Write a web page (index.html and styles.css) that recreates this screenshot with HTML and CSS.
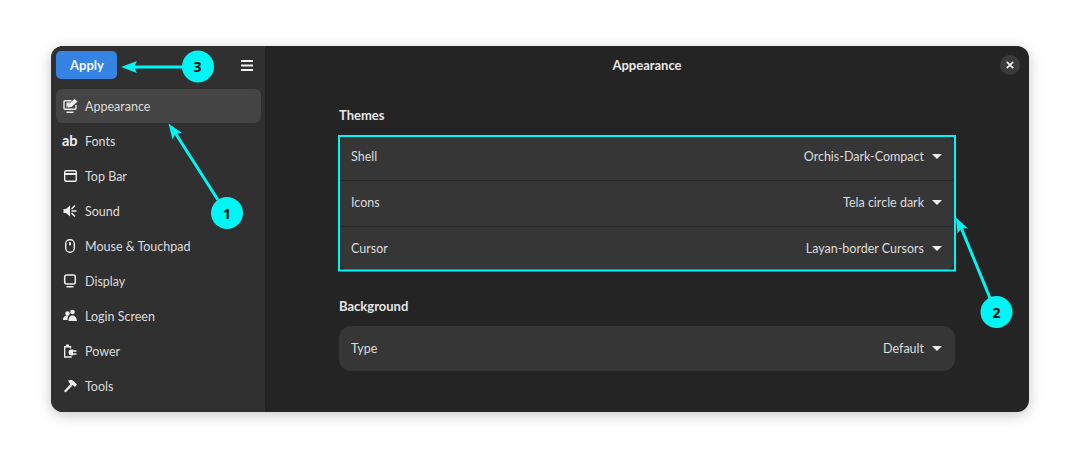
FILE: index.html
```html
<!DOCTYPE html>
<html lang="en">
<head>
<meta charset="utf-8">
<title>Appearance</title>
<link rel="stylesheet" href="styles.css">
</head>
<body>
<div class="window">
  <aside class="sidebar">
    <div class="side-head">
      <button class="apply">Apply</button>
      <svg class="menu" width="12" height="11" viewBox="0 0 12 11"><path d="M0 1h12M0 5.500h12M0 10h12" stroke="#f0f0f0" stroke-width="1.800"/></svg>
    </div>
    <nav class="nav">
      <div class="nav-row active">
        <svg class="ico" viewBox="0 0 16 16"><path d="M9.500 2.700H3a1 1 0 0 0-1 1v6.600a1 1 0 0 0 1 1h10a1 1 0 0 0 1-1V7" fill="none" stroke="#eee" stroke-width="1.400"/><path d="M4.500 14.200h7" stroke="#eee" stroke-width="1.600"/><path d="M4.500 4.500h4L6 7.500l-1 2h-.5z" fill="#eee"/><path d="M5.500 9.500l1-3 6-5.500 3 2.500-6 5.500z" fill="#eee"/></svg>
        <span>Appearance</span>
      </div>
      <div class="nav-row"><span class="ico ab">ab</span><span>Fonts</span></div>
      <div class="nav-row">
        <svg class="ico" viewBox="0 0 16 16"><rect x="2.700" y="2.700" width="11.600" height="10.600" rx="1.500" fill="none" stroke="#eee" stroke-width="1.400"/><path d="M3 6h11" stroke="#eee" stroke-width="1.800"/></svg>
        <span>Top Bar</span>
      </div>
      <div class="nav-row">
        <svg class="ico" viewBox="0 0 16 16"><path d="M1.500 6v4h2.500l4 3.500v-11l-4 3.500z" fill="#eee"/><path d="M9.500 8h5M9.500 6l3.500-3.500M9.500 10l3.500 3.500" stroke="#eee" stroke-width="1.500"/></svg>
        <span>Sound</span>
      </div>
      <div class="nav-row">
        <svg class="ico" viewBox="0 0 16 16"><rect x="3.700" y="1.700" width="8.600" height="12.600" rx="4" fill="none" stroke="#eee" stroke-width="1.400"/><rect x="7" y="4" width="2" height="3.500" rx="1" fill="#eee"/></svg>
        <span>Mouse &amp; Touchpad</span>
      </div>
      <div class="nav-row">
        <svg class="ico" viewBox="0 0 16 16"><rect x="2.700" y="2" width="10.600" height="9" rx="2" fill="none" stroke="#eee" stroke-width="1.500"/><path d="M4.500 13.800h7" stroke="#eee" stroke-width="1.600"/></svg>
        <span>Display</span>
      </div>
      <div class="nav-row">
        <svg class="ico" viewBox="0 0 16 16"><circle cx="5.500" cy="5.500" r="2.200" fill="#eee"/><circle cx="10.500" cy="4" r="2.300" fill="#eee"/><path d="M1 12c0-3 1.500-4.500 4-4.500 1 0 1.500.3 1.500.3-.6.800-1 2-1 4.200z" fill="#eee"/><path d="M6.500 13c0-3.500 1.500-5.500 4-5.500s4 2 4.500 5.500z" fill="#eee"/></svg>
        <span>Login Screen</span>
      </div>
      <div class="nav-row">
        <svg class="ico" viewBox="0 0 16 16"><path d="M8.500 5.500V3.800H2.700V14h7" fill="none" stroke="#eee" stroke-width="1.400"/><path d="M4 1.500h3v1.500H4z" fill="#eee"/><path d="M6.500 9.500a3 3 0 0 1 3-3h1.500v6H9.500a3 3 0 0 1-3-3z" fill="#eee"/><path d="M11 8h3.500M11 11h3.500" stroke="#eee" stroke-width="1.500"/></svg>
        <span>Power</span>
      </div>
      <div class="nav-row">
        <svg class="ico" viewBox="0 0 16 16"><path d="M6 2.500c2.500-1 5-.5 6 1l3 3-2 2.500-2.500-2-1.500.8z" fill="#eee"/><path d="M8.500 6l-6.500 7 1.500 1.500 6.500-6.500z" fill="#eee"/></svg>
        <span>Tools</span>
      </div>
    </nav>
  </aside>
  <main class="main">
    <header class="main-head">
      <h1 class="title">Appearance</h1>
      <button class="close"><svg width="8" height="8" viewBox="0 0 8 8"><path d="M.8.800l6.400 6.400M7.200.800L.8 7.200" stroke="#f2f2f2" stroke-width="1.700"/></svg></button>
    </header>
    <section class="content">
      <h2 class="group-title">Themes</h2>
      <div class="card">
        <div class="row"><span>Shell</span><span class="value">Orchis-Dark-Compact<i class="caret"></i></span></div>
        <div class="row"><span>Icons</span><span class="value">Tela circle dark<i class="caret"></i></span></div>
        <div class="row"><span>Cursor</span><span class="value">Layan-border Cursors<i class="caret"></i></span></div>
      </div>
      <h2 class="group-title second">Background</h2>
      <div class="card">
        <div class="row single"><span>Type</span><span class="value">Default<i class="caret"></i></span></div>
      </div>
    </section>
  </main>
</div>
<svg class="marks" width="1080" height="468" viewBox="0 0 1080 468">
  <rect x="339" y="136" width="616" height="134.500" fill="none" stroke="#00f5f5" stroke-width="2"/>
  <g stroke="#00f5f5" stroke-width="3" fill="#00f5f5">
    <path d="M184 67H128"/>
    <path d="M121 67l16-6-3 6 3 6z" stroke="none"/>
    <path d="M218 200L174 131"/>
    <path d="M168.500 123.500l13.500 9.500-6.500.5-3 6z" stroke="none"/>
    <path d="M990 298L960 225"/>
    <path d="M956 217.500l12 11-6.500-.5-4 5.500z" stroke="none"/>
  </g>
  <g fill="#00f5f5">
    <circle cx="198" cy="66.500" r="16"/>
    <circle cx="227" cy="213" r="16"/>
    <circle cx="996.500" cy="312" r="16"/>
  </g>
  <g class="num">
    <text x="197.500" y="72">3</text>
    <text x="227" y="218.500">1</text>
    <text x="996.500" y="317.500">2</text>
  </g>
</svg>
</body>
</html>
```
FILE: styles.css
```css
* { box-sizing: border-box; }
html, body { margin: 0; height: 100%; }
body {
  background: #fff;
  padding: 46px 51px 56px;
  font-family: "Lato", "Noto Sans", sans-serif;
  font-size: 12.500px;
  color: #dcdcdc;
  overflow: hidden;
}
.window {
  display: flex;
  height: 366px;
  border-radius: 12px;
  overflow: hidden;
  background: #242424;
  box-shadow: 0 3px 14px rgba(0, 0, 0, .22);
}
.sidebar {
  width: 214px;
  flex: none;
  background: #303030;
  padding: 5px 4px 5px 5px;
}
.side-head {
  display: flex;
  align-items: center;
  justify-content: space-between;
  height: 28px;
  margin-bottom: 10px;
  padding-right: 8px;
}
.apply {
  width: 61px;
  height: 28px;
  border: 0;
  border-radius: 5px;
  background: #3584e4;
  color: #f4f8fd;
  font: 700 13px "Lato", sans-serif;
  padding: 0 0 0 1px;
}
.nav { display: flex; flex-direction: column; gap: 1px; }
.nav-row {
  display: flex;
  align-items: center;
  gap: 7px;
  height: 34px;
  padding-left: 6px;
  border-radius: 6px;
}
.nav-row.active { background: #444; }
.ico { width: 16px; height: 16px; flex: none; }
.ab {
  color: #eee;
  font-weight: 700;
  font-size: 14.500px;
  line-height: 16px;
  white-space: nowrap;
}
.main { flex: 1; min-width: 0; display: flex; flex-direction: column; }
.main-head {
  position: relative;
  height: 38px;
  display: flex;
  align-items: center;
  justify-content: center;
}
.title { margin: 0; font-size: 13px; font-weight: 700; color: #e8e8e8; }
.close {
  position: absolute;
  right: 9px;
  top: 9px;
  width: 20px;
  height: 20px;
  border: 0;
  padding: 0;
  border-radius: 50%;
  background: #3b3b3b;
  display: flex;
  align-items: center;
  justify-content: center;
}
.content { padding: 22px 74px 0; }
.group-title {
  margin: 0 0 10px;
  height: 19px;
  line-height: 19px;
  font-size: 13px;
  font-weight: 700;
  color: #e6e6e6;
}
.group-title.second { margin-top: 26px; }
.card { background: #363636; border-radius: 12px; overflow: hidden; }
.row {
  display: flex;
  align-items: center;
  justify-content: space-between;
  height: 45px;
  padding: 0 13px 2px 12px;
}
.row + .row { border-top: 1px solid #2a2a2a; }
.row:nth-child(2) { height: 46px; }
.row.single { padding-bottom: 0; }
.value { display: flex; align-items: center; }
.caret {
  width: 0;
  height: 0;
  margin-left: 8px;
  border-left: 5px solid transparent;
  border-right: 5px solid transparent;
  border-top: 5px solid #f0f0f0;
}
.marks { position: absolute; left: 0; top: 0; pointer-events: none; }
.num text {
  font: 700 14px "Noto Sans", sans-serif;
  fill: #0a0a0a;
  text-anchor: middle;
}
```
